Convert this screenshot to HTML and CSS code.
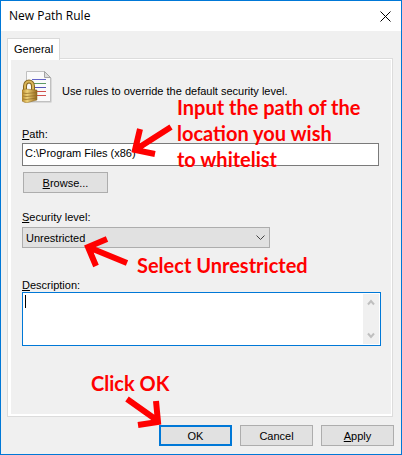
FILE: index.html
```html
<!DOCTYPE html>
<html lang="en">
<head>
  <meta charset="UTF-8" />
  <meta name="viewport" content="width=device-width, initial-scale=1.0"/>
  <title>New Path Rule</title>
  <link rel="stylesheet" href="styles.css">
</head>
<body>
  <div class="window">
    <header class="titlebar">
      <h1>New Path Rule</h1>
      <button class="close" type="button" aria-label="Close">
        <svg width="11" height="11" viewBox="0 0 11 11"><path d="M.5 .5l10 10M10.5 .5l-10 10"/></svg>
      </button>
    </header>

    <form class="content">
      <div class="tabs">
        <button class="tab" type="button">General</button>
      </div>

      <div class="panel">
        <div class="intro">
          <svg class="icon" width="32" height="32" viewBox="0 0 32 32">
            <defs>
              <linearGradient id="gold" x1="0" x2="1" y1="0" y2="0">
                <stop offset="0" stop-color="#b98a2c"/>
                <stop offset=".35" stop-color="#efd27a"/>
                <stop offset="1" stop-color="#97691c"/>
              </linearGradient>
            </defs>
            <path d="M5.5 .5h17l6 6v24h-23z" fill="#c4c4c4" transform="translate(1 1)"/>
            <path d="M4.5 .5h18l6 6v24h-24z" fill="#fafafa" stroke="#c0c0c0"/>
            <path d="M22.5 .5v6h6z" fill="#dcdcdc" stroke="#a4a4a4"/>
            <path d="M10 8.500h14" stroke="#6464c8"/>
            <path d="M10 12.500h14" stroke="#5c9a62"/>
            <path d="M10 16.500h14" stroke="#5555b4"/>
            <path d="M10 20.500h14" stroke="#d0504c"/>
            <path d="M10 24.500h14" stroke="#d0504c"/>
            <path d="M3 19v-4c0-6 8-6 8 0v4" fill="none" stroke="#86641f" stroke-width="4"/>
            <path d="M3 19v-4c0-6 8-6 8 0v4" fill="none" stroke="#d9b558" stroke-width="2"/>
            <path d="M0 19l3-1 12 1v10l-11 3-4-2z" fill="url(#gold)" stroke="#8d6a24" stroke-width=".5"/>
            <path d="M1 22l3 .5 11-1M1 25l3 .5 11-1M1 28l3 .5 11-1.500" fill="none" stroke="#8f6a24" stroke-width=".7"/>
          </svg>
          <p>Use rules to override the default security level.</p>
        </div>

        <label class="label-path" for="path"><u>P</u>ath:</label>
        <input id="path" class="path" type="text" value="C:\Program Files (x86)">
        <button class="btn browse" type="button"><u>B</u>rowse...</button>

        <label class="label-level" for="level"><u>S</u>ecurity level:</label>
        <div class="select">
          <select id="level">
            <option>Unrestricted</option>
          </select>
          <svg class="chevron" width="9" height="6" viewBox="0 0 9 6"><path d="M.5 .5l4 4 4-4"/></svg>
        </div>

        <label class="label-desc" for="desc"><u>D</u>escription:</label>
        <div class="memo">
          <textarea id="desc"></textarea>
          <span class="caret"></span>
          <div class="scrollbar">
            <svg width="8" height="7" viewBox="0 0 8 7"><path d="M1 5.500l3-3.500 3 3.500"/></svg>
            <svg width="8" height="7" viewBox="0 0 8 7"><path d="M1 1.500l3 3.500 3-3.500"/></svg>
          </div>
        </div>
      </div>

      <div class="actions">
        <button class="btn primary" type="button">OK</button>
        <button class="btn" type="button">Cancel</button>
        <button class="btn" type="button"><u>A</u>pply</button>
      </div>
    </form>

    <!-- walkthrough notes on top of the dialog -->
    <p class="note note-path">Input the path of the<br>location you wish<br>to whitelist</p>
    <p class="note note-level">Select Unrestricted</p>
    <p class="note note-ok">Click OK</p>
    <svg class="arrow arrow-path" width="46" height="36" viewBox="0 0 46 36"><path d="M42 4L6 27M11 6L6 27L26 31"/></svg>
    <svg class="arrow arrow-level" width="50" height="34" viewBox="0 0 50 34"><path d="M46 27L7 11M26 3L7 11L15 30"/></svg>
    <svg class="arrow arrow-ok" width="42" height="36" viewBox="0 0 42 36"><path d="M4 4L35 26M33 6L35 27L15 30"/></svg>
  </div>
</body>
</html>
```
FILE: styles.css
```css
:root {
  --accent: #0078d7;
  --face: #f0f0f0;
  --button: #e1e1e1;
  --line: #adadad;
  --note: #ff0000;
}
* {
  box-sizing: border-box;
}
body {
  margin: 0;
  font-family: "Liberation Sans", Arial, sans-serif;
  font-size: 11px;
  line-height: 14px;
  color: #000;
}
p {
  margin: 0;
}
button, input, select, textarea {
  font: inherit;
  color: inherit;
  border-radius: 0;
}
.window {
  position: relative;
  display: flex;
  flex-direction: column;
  min-height: 100vh;
  border: 1px solid var(--accent);
  background: var(--face);
}
.titlebar {
  display: flex;
  justify-content: space-between;
  align-items: center;
  height: 30px;
  padding: 0 10px 0 8px;
  background: #fff;
}
h1 {
  margin: 0;
  font-family: "Open Sans", sans-serif;
  font-size: 12px;
  font-weight: normal;
}
.close {
  display: flex;
  padding: 0;
  border: none;
  background: none;
}
.close path {
  stroke: #000;
}
.content {
  flex: 1;
  display: flex;
  flex-direction: column;
  padding: 7px 7px 8px 6px;
}
.tabs {
  display: flex;
}
.tab {
  position: relative;
  z-index: 1;
  height: 22px;
  margin-bottom: -2px;
  padding: 0 6px 2px;
  border: 1px solid #d9d9d9;
  border-bottom: none;
  background: #fff;
}
.panel {
  flex: 1;
  display: flex;
  flex-direction: column;
  align-items: flex-start;
  margin-right: 1px;
  padding: 12px 11px 12px 14px;
  border: 1px solid #dcdcdc;
  box-shadow: inset 3px 0 #fff, inset -1px 0 #fff, inset 0 1px #fff, inset 0 -2px #fff;
}
.intro {
  display: flex;
  align-items: center;
  gap: 8px;
}
.intro p {
  padding-top: 8px;
}
.label-path {
  margin: 24px 0 2px;
}
.label-level {
  margin: 17px 0 3px;
}
.label-desc {
  margin: 30px 0 0;
}
.path {
  width: calc(100% - 2px);
  height: 23px;
  padding: 0 2px 4px;
  border: 1px solid #7a7a7a;
  background: #fff;
}
.btn {
  width: 73px;
  height: 21px;
  padding: 0;
  border: 1px solid var(--line);
  background: var(--button);
}
.browse {
  width: 85px;
  margin: 6px 0 0 1px;
}
.primary {
  border: 2px solid var(--accent);
}
.select {
  position: relative;
  width: 69%;
}
select {
  display: block;
  width: 100%;
  height: 21px;
  padding: 0 20px 0 3px;
  border: 1px solid var(--line);
  background: var(--button);
  appearance: none;
}
.chevron {
  position: absolute;
  right: 5px;
  top: 8px;
  fill: none;
  stroke: #444;
}
.memo {
  position: relative;
  display: flex;
  width: 100%;
  height: 54px;
  padding: 1px;
  border: 1px solid var(--accent);
  background: #fff;
}
textarea {
  flex: 1;
  padding: 0 2px;
  border: none;
  outline: none;
  resize: none;
  background: #fff;
}
.caret {
  position: absolute;
  left: 2px;
  top: 2px;
  width: 1px;
  height: 13px;
  background: #000;
}
.scrollbar {
  display: flex;
  flex-direction: column;
  justify-content: space-between;
  align-items: center;
  width: 16px;
  padding: 5px 0;
  background: var(--face);
}
.scrollbar path {
  fill: none;
  stroke: #bfbfbf;
  stroke-width: 2;
}
.actions {
  display: flex;
  justify-content: flex-end;
  gap: 8px;
  margin-top: 8px;
}
.note {
  position: absolute;
  font-family: Lato, sans-serif;
  font-size: 20px;
  font-weight: bold;
  line-height: 26px;
  color: var(--note);
  white-space: nowrap;
}
.note-path {
  left: 176px;
  top: 93px;
}
.note-level {
  left: 136px;
  top: 251px;
}
.note-ok {
  left: 90px;
  top: 369px;
}
.arrow {
  position: absolute;
  fill: none;
  stroke: var(--note);
  stroke-width: 6;
}
.arrow-path {
  left: 128px;
  top: 122px;
}
.arrow-level {
  left: 80px;
  top: 235px;
}
.arrow-ok {
  left: 122px;
  top: 394px;
}
```
